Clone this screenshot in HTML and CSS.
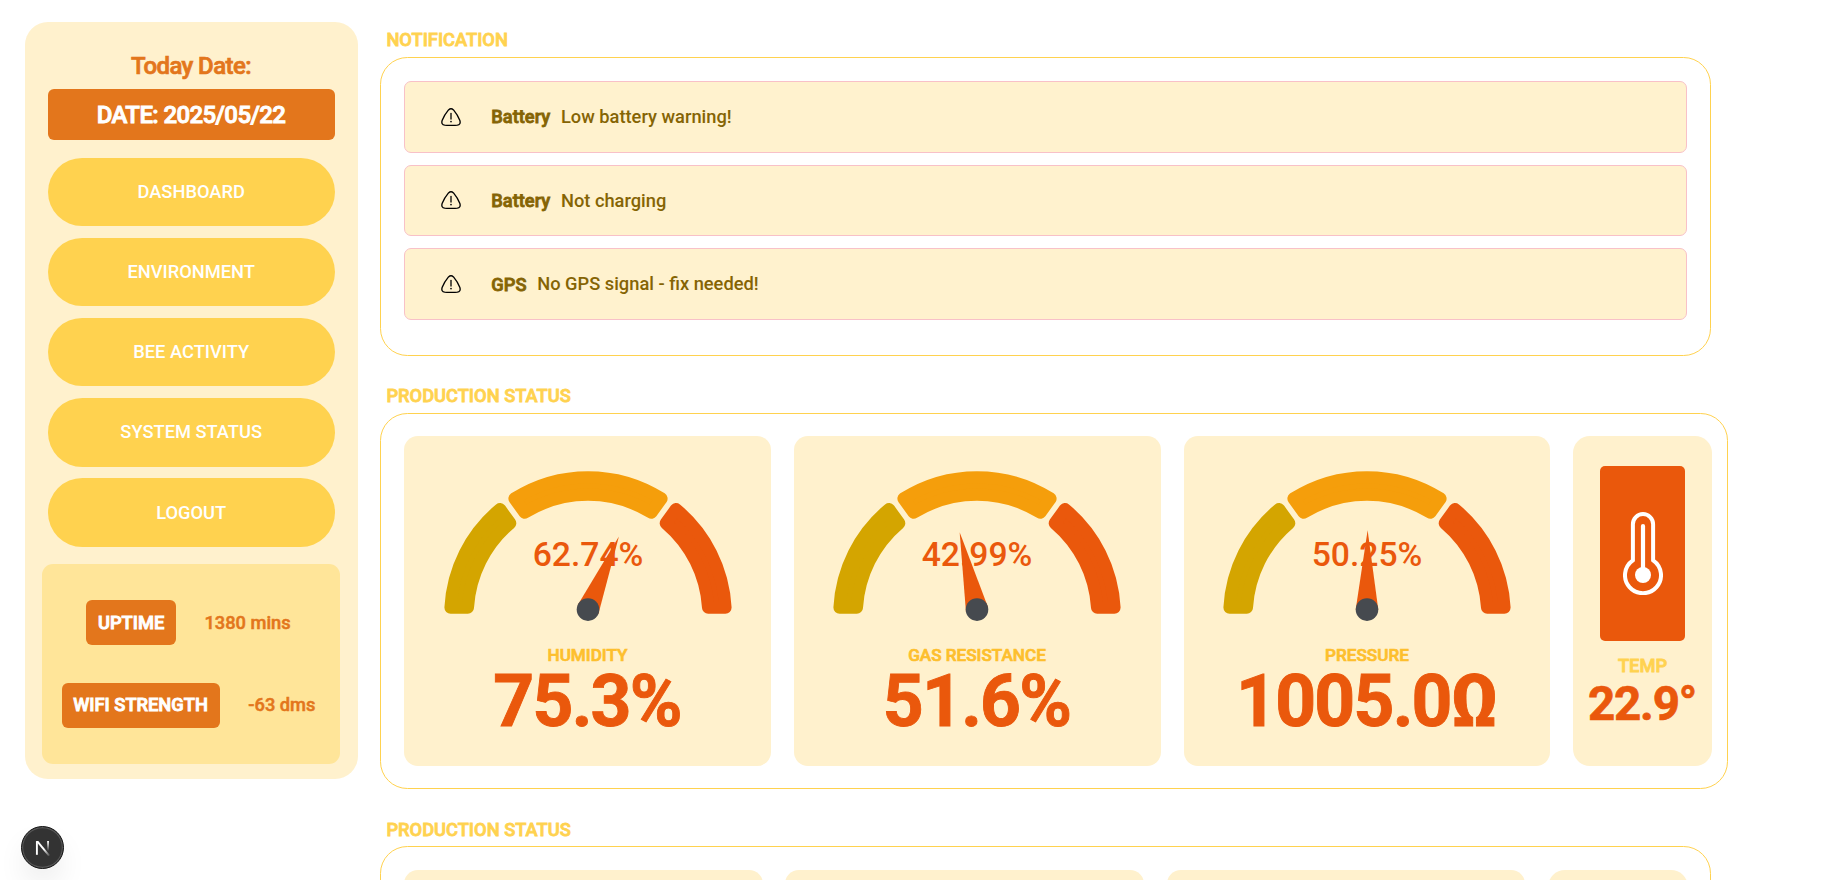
FILE: index.html
```html
<!DOCTYPE html>
<html lang="en">
<head>
<meta charset="utf-8">
<title>Hive Dashboard</title>
<link rel="stylesheet" href="styles.css">
</head>
<body>
<svg class="defs" width="0" height="0" aria-hidden="true">
  <symbol id="arcs" viewBox="-150 -150 300 160">
    <g stroke-width="12.4" stroke-linejoin="round">
      <path fill="#d4a500" stroke="#d4a500" d="M-137.4 -7.4A137.6 137.6 0 0 1 -88 -105.8L-77.9 -91.8A120.4 120.4 0 0 0 -120.2 -7.4Z"/>
      <path fill="#f59e0b" stroke="#f59e0b" d="M-73.4 -116.4A137.6 137.6 0 0 1 73.4 -116.4L63.3 -102.4A120.4 120.4 0 0 0 -63.3 -102.4Z"/>
      <path fill="#ea580c" stroke="#ea580c" d="M137.4 -7.4A137.6 137.6 0 0 0 88 -105.8L77.9 -91.8A120.4 120.4 0 0 1 120.2 -7.4Z"/>
    </g>
  </symbol>
  <symbol id="warn" viewBox="0 0 20 18">
    <path d="M7.5 1.9Q10 -.4 12.5 1.9Q16.5 6.6 18.9 12.6Q20 16.7 16.3 17.1Q10 17.6 3.7 17.1Q0 16.7 1.1 12.6Q3.5 6.6 7.5 1.9Z" fill="none" stroke="#000" stroke-width="1.35"/>
    <path d="M10 5.5V11" stroke="#000" stroke-width="1.3" stroke-linecap="round"/>
    <circle cx="10" cy="13.6" r=".85"/>
  </symbol>
</svg>
<div class="page">
  <aside class="sidebar">
    <h2 class="today">Today Date:</h2>
    <div class="date">DATE: 2025/05/22</div>
    <nav class="menu">
      <a class="menu-item">DASHBOARD</a>
      <a class="menu-item">ENVIRONMENT</a>
      <a class="menu-item">BEE ACTIVITY</a>
      <a class="menu-item">SYSTEM STATUS</a>
      <a class="menu-item">LOGOUT</a>
    </nav>
    <div class="info">
      <div class="info-row"><span class="tag">UPTIME</span><span class="reading">1380 mins</span></div>
      <div class="info-row"><span class="tag">WIFI STRENGTH</span><span class="reading">-63 dms</span></div>
    </div>
  </aside>
  <main class="main">
    <h3 class="heading">NOTIFICATION</h3>
    <section class="panel notices">
      <div class="notice"><svg class="warn"><use href="#warn"/></svg><b class="source">Battery</b><span>Low battery warning!</span></div>
      <div class="notice"><svg class="warn"><use href="#warn"/></svg><b class="source">Battery</b><span>Not charging</span></div>
      <div class="notice"><svg class="warn"><use href="#warn"/></svg><b class="source">GPS</b><span>No GPS signal - fix needed!</span></div>
    </section>
    <h3 class="heading">PRODUCTION STATUS</h3>
    <section class="panel production">
      <div class="card">
        <svg class="gauge" viewBox="-150 -150 300 160">
          <use href="#arcs" x="-150" y="-150" width="300" height="160"/>
          <text class="gauge-text" x="0" y="-48.6">62.74%</text>
          <path class="needle" transform="translate(0 -5.4) rotate(22.93)" d="M-11.3 0L0 -79.3L11.3 0Z"/>
          <circle class="hub" cy="-5.4" r="11.3"/>
        </svg>
        <div class="label">HUMIDITY</div>
        <div class="value">75.3%</div>
      </div>
      <div class="card">
        <svg class="gauge" viewBox="-150 -150 300 160">
          <use href="#arcs" x="-150" y="-150" width="300" height="160"/>
          <text class="gauge-text" x="0" y="-48.6">42.99%</text>
          <path class="needle" transform="translate(0 -5.4) rotate(-12.62)" d="M-11.3 0L0 -79.3L11.3 0Z"/>
          <circle class="hub" cy="-5.4" r="11.3"/>
        </svg>
        <div class="label">GAS RESISTANCE</div>
        <div class="value">51.6%</div>
      </div>
      <div class="card">
        <svg class="gauge" viewBox="-150 -150 300 160">
          <use href="#arcs" x="-150" y="-150" width="300" height="160"/>
          <text class="gauge-text" x="0" y="-48.6">50.25%</text>
          <path class="needle" transform="translate(0 -5.4) rotate(.45)" d="M-11.3 0L0 -79.3L11.3 0Z"/>
          <circle class="hub" cy="-5.4" r="11.3"/>
        </svg>
        <div class="label">PRESSURE</div>
        <div class="value">1005.0Ω</div>
      </div>
      <div class="card temp">
        <div class="temp-box">
          <svg class="thermo" viewBox="0 0 40 83">
            <path d="M9.9 48.3V12.2A10.1 10.1 0 0 1 30.1 12.2V48.3A18 18 0 1 1 9.9 48.3Z" fill="none" stroke="#fff" stroke-width="4"/>
            <path d="M20 14V60" stroke="#fff" stroke-width="4.2" stroke-linecap="round"/>
            <circle cx="20" cy="63" r="8" fill="#fff"/>
          </svg>
        </div>
        <div class="temp-label">TEMP</div>
        <div class="temp-value">22.9°</div>
      </div>
    </section>
    <h3 class="heading">PRODUCTION STATUS</h3>
    <section class="panel more">
      <div class="card"></div>
      <div class="card"></div>
      <div class="card"></div>
      <div class="card temp"></div>
    </section>
  </main>
</div>
<div class="dev-badge">
  <svg class="dev-logo" viewBox="0 0 16 16">
    <defs>
      <linearGradient id="fadeDown" x1="0" y1="0" x2="0" y2="1"><stop offset="0" stop-color="#fff"/><stop offset="1" stop-color="#fff" stop-opacity="0"/></linearGradient>
      <linearGradient id="fadeDiag" gradientUnits="userSpaceOnUse" x1="9" y1="9" x2="15.5" y2="16.5"><stop offset="0" stop-color="#fff"/><stop offset="1" stop-color="#fff" stop-opacity="0"/></linearGradient>
    </defs>
    <path d="M1.9 14.8V1.2" stroke="#fff" stroke-width="1.9"/>
    <path d="M1 1H3.3L15 15.2L13.3 16.2L2.4 3Z" fill="url(#fadeDiag)"/>
    <rect x="12.1" y="1" width="1.9" height="10" fill="url(#fadeDown)"/>
  </svg>
</div>
</body>
</html>
```
FILE: styles.css
```css
* { box-sizing: border-box; }

html { overflow: hidden; }

body {
  margin: 0;
  height: 880px;
  overflow: hidden;
  background: #fff;
  font: 500 18.29px/27.43px Roboto, sans-serif;
}

.defs { position: absolute; }

.page {
  display: flex;
  align-items: flex-start;
  gap: 22px;
  height: 880px;
  padding: 22px 0 0 25px;
  overflow: hidden;
}

.sidebar {
  width: 333px;
  height: 757px;
  padding: 25px 17px 15px;
  border-radius: 23px;
  background: #fff1cd;
}

.today {
  margin: 0 1px 4px 0;
  color: #e3761c;
  font-size: 24px;
  font-weight: 500;
  letter-spacing: -.025em;
  line-height: 38px;
  text-align: center;
  -webkit-text-stroke: .7px;
}

.date {
  height: 51px;
  margin: 0 6px 17.8px;
  padding-right: 1px;
  border-radius: 6px;
  background: #e3761c;
  color: #fff;
  font-size: 24px;
  letter-spacing: -.025em;
  line-height: 53px;
  text-align: center;
  -webkit-text-stroke: .9px;
}

.menu {
  display: flex;
  flex-direction: column;
  gap: 11.5px;
  margin: 0 6px 17.3px;
}

.menu-item {
  height: 68.57px;
  padding-right: .6px;
  border-radius: 34.3px;
  background: #ffd24f;
  color: #fff;
  line-height: 68.4px;
  text-align: center;
}

.menu-item:last-child { line-height: 70px; }

.info {
  display: flex;
  flex-direction: column;
  gap: 38px;
  width: 298px;
  height: 200px;
  padding-top: 36px;
  border-radius: 11px;
  background: #ffe599;
}

.info-row {
  display: flex;
  justify-content: center;
  align-items: center;
  gap: 28.5px;
  height: 45px;
  padding-right: 5px;
  -webkit-text-stroke: .5px;
}

.info-row + .info-row { padding-right: 4.6px; }

.tag {
  height: 45px;
  padding: 0 11.7px;
  border-radius: 6px;
  background: #e3761c;
  color: #fff;
  line-height: 45px;
  -webkit-text-stroke: .9px;
}

.info-row + .info-row .tag,
.info-row + .info-row .reading { line-height: 44px; }

.info-row + .info-row .tag { padding: 0 11.9px 0 11.3px; }

.reading { color: #e3761c; line-height: 45px; }

.main { padding-top: 4px; }

.heading {
  margin: 0 0 3.5px 6.4px;
  color: #ffd24f;
  font-size: 18.29px;
  font-weight: 500;
  line-height: 27.5px;
  -webkit-text-stroke: .8px;
}

.production + .heading { margin-bottom: 3px; }

.panel {
  border: 1px solid #ffd24f;
  border-radius: 27.4px;
}

.notices {
  display: flex;
  flex-direction: column;
  gap: 12px;
  width: 1331px;
  height: 299px;
  margin-bottom: 26px;
  padding: 23px;
}

.notice {
  display: flex;
  align-items: center;
  height: 71.6px;
  padding-left: 36px;
  border: 1px solid #f8c1c8;
  border-radius: 7px;
  background: #fff2ce;
  color: #856404;
}

.warn { width: 20px; height: 18px; margin-right: 30.3px; }

.source {
  margin-right: 10.7px;
  font-weight: 500;
  -webkit-text-stroke: .8px;
}

.notice:last-child .source { padding-top: 1.5px; }

.production {
  display: flex;
  gap: 23px;
  width: 1348px;
  height: 376px;
  margin-bottom: 26.5px;
  padding: 22px 0 0 23px;
}

.card {
  flex: none;
  width: 367px;
  height: 330px;
  padding-top: 29px;
  border-radius: 14px;
  background: #fff1cd;
  text-align: center;
}

.production .card:nth-child(2) { padding-right: 1px; }
.production .card:nth-child(3) { width: 366px; }

.gauge { display: block; width: 300px; height: 160px; margin: 0 auto; }

.gauge-text {
  fill: #ea580c;
  font-size: 33.7px;
  font-weight: 500;
  text-anchor: middle;
}

.needle { fill: #ea580c; }
.hub { fill: #464a4f; }

.label {
  margin-top: 17px;
  color: #fdbf2d;
  font-size: 17.14px;
  line-height: 26px;
  -webkit-text-stroke: .7px;
}

.value {
  margin-top: -2.5px;
  padding-right: 1px;
  color: #ea580c;
  font-size: 71.4px;
  font-weight: 700;
  letter-spacing: -.025em;
  line-height: 72px;
  -webkit-text-stroke: .9px;
}

.card.temp {
  display: flex;
  flex-direction: column;
  align-items: center;
  width: 139px;
  padding-top: 30px;
  border-radius: 17px;
}

.temp-box {
  display: flex;
  justify-content: center;
  align-items: center;
  width: 85px;
  height: 175px;
  border-radius: 5px;
  background: #ea580c;
}

.thermo { width: 40px; height: 83px; }

.temp-label {
  margin-top: 11px;
  color: #ffd24f;
  line-height: 27px;
  -webkit-text-stroke: .8px;
}

.temp-value {
  margin-top: 1px;
  padding-right: 1px;
  color: #ea580c;
  font-size: 47.5px;
  font-weight: 700;
  letter-spacing: -.025em;
  line-height: 48px;
  -webkit-text-stroke: .7px;
}

.more {
  display: flex;
  gap: 22.4px;
  width: 1331px;
  height: 376px;
  padding: 22.5px 0 0 23px;
}

.more .card { width: 358.9px; }
.more .card.temp { width: 140px; }

.dev-badge {
  position: fixed;
  left: 21px;
  top: 826px;
  display: flex;
  justify-content: center;
  align-items: center;
  width: 43px;
  height: 43px;
  border: 1px solid #151515;
  border-radius: 50%;
  background: #333;
  box-shadow: inset 0 0 0 1.2px #585858, 0 16px 32px -8px rgba(0, 0, 0, .16);
}

.dev-logo { width: 16px; height: 16px; }
```
